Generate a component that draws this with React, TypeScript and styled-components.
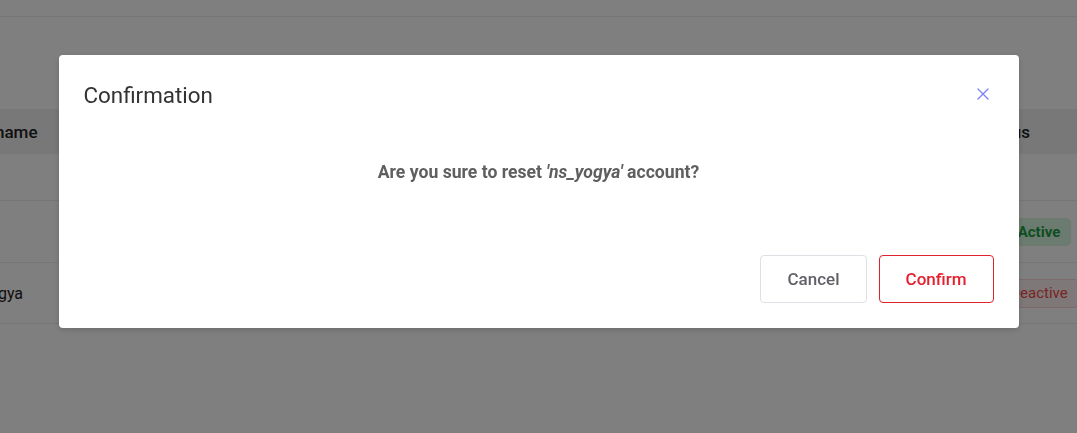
import React from "react";
import styled, { createGlobalStyle } from "styled-components";

const GlobalStyle = createGlobalStyle`
  html, body {
    margin: 0;
    padding: 0;
    background: #ffffff;
    font-family: Roboto, "Noto Sans", Arial, sans-serif;
    color: #333333;
  }
  * { box-sizing: border-box; }
`;

const Page = styled.div`
  width: 100%;
  min-height: 433px;
  background: #ffffff;
  overflow: hidden;
`;

const TopBar = styled.div`
  height: 17px;
  border-bottom: 1px solid #ececec;
`;

const TableWrap = styled.div`
  margin-top: 92px;
  overflow: hidden;
`;

const Table = styled.div`
  width: 1153px;
  margin-left: -56px;
  display: flex;
  flex-direction: column;
`;

const Row = styled.div<{ $h: number; $head?: boolean }>`
  display: grid;
  grid-template-columns: 1fr 116px;
  align-items: center;
  height: ${(p) => p.$h}px;
  background: ${(p) => (p.$head ? "#f1f1f1" : "#ffffff")};
  border-bottom: ${(p) => (p.$head ? "none" : "1px solid #ececec")};
`;

const HeadCell = styled.div`
  padding: 0 16px;
  font-size: 17px;
  font-weight: 500;
  color: #222222;
`;

const StatusHead = styled(HeadCell)`
  padding: 0;
`;

const Cell = styled.div`
  padding: 0 16px;
  font-size: 16px;
  color: #222222;
`;

const NameText = styled.span`
  margin-left: -3px;
`;

const BadgeCell = styled.div`
  display: flex;
  justify-content: center;
`;

const Badge = styled.span<{ $tone: "ok" | "off" }>`
  display: inline-flex;
  align-items: center;
  height: ${(p) => (p.$tone === "ok" ? 28 : 29)}px;
  padding: 0 10px;
  border-radius: 5px;
  font-size: 15px;
  font-weight: ${(p) => (p.$tone === "ok" ? 700 : 400)};
  color: ${(p) => (p.$tone === "ok" ? "#1f9d45" : "#f04a4a")};
  background: ${(p) => (p.$tone === "ok" ? "#d6f6de" : "#fff0f0")};
  border: 1px solid ${(p) => (p.$tone === "ok" ? "#d6f6de" : "#f8d4d4")};
`;

const Overlay = styled.div`
  position: fixed;
  inset: 0;
  background: rgba(0, 0, 0, 0.5);
  display: flex;
  justify-content: center;
  align-items: flex-start;
  padding-top: 55px;
`;

const Modal = styled.div`
  width: 960px;
  background: #ffffff;
  border-radius: 4px;
  box-shadow: 0 2px 6px rgba(0, 0, 0, 0.15);
  display: flex;
  flex-direction: column;
`;

const ModalHeader = styled.div`
  display: flex;
  align-items: center;
  justify-content: space-between;
  padding: 25px 24px 0 25px;
  height: 55px;
`;

const Title = styled.h2`
  margin: 0;
  font-size: 22.4px;
  line-height: 30px;
  font-weight: 400;
  color: #333333;
`;

const CloseButton = styled.button`
  width: 24px;
  height: 24px;
  padding: 0;
  border: none;
  background: transparent;
  display: flex;
  align-items: center;
  justify-content: center;
  margin-top: -2px;
  cursor: pointer;
`;

const ModalBody = styled.div`
  padding: 50px 25px;
  text-align: center;
`;

const Message = styled.p`
  margin: 0;
  font-size: 17.6px;
  line-height: 24px;
  font-weight: 700;
  color: #5f5f5f;
`;

const Name = styled.em`
  font-style: italic;
`;

const ModalFooter = styled.div`
  display: flex;
  justify-content: flex-end;
  gap: 12px;
  padding: 21px 25px 25px;
`;

const Button = styled.button<{ $variant: "plain" | "danger" }>`
  height: 48px;
  padding: 0 26px;
  border-radius: 4px;
  background: #ffffff;
  font-family: Roboto, "Noto Sans", Arial, sans-serif;
  font-size: 17px;
  font-weight: 500;
  cursor: pointer;
  color: ${(p) => (p.$variant === "danger" ? "#e5202e" : "#606066")};
  border: 1px solid ${(p) => (p.$variant === "danger" ? "#e0222e" : "#dfe0e6")};
`;

export default function App() {
  return (
    <>
      <GlobalStyle />
      <Page>
        <TopBar />
        <TableWrap>
          <Table>
            <Row $h={45} $head>
              <HeadCell>Username</HeadCell>
              <StatusHead>Status</StatusHead>
            </Row>
            <Row $h={47}>
              <Cell />
              <Cell />
            </Row>
            <Row $h={62}>
              <Cell>
                <NameText>nsa</NameText>
              </Cell>
              <BadgeCell>
                <Badge $tone="ok">Active</Badge>
              </BadgeCell>
            </Row>
            <Row $h={61}>
              <Cell>
                <NameText>ns_yogya</NameText>
              </Cell>
              <BadgeCell>
                <Badge $tone="off">Deactive</Badge>
              </BadgeCell>
            </Row>
          </Table>
        </TableWrap>
      </Page>
      <Overlay>
        <Modal role="dialog" aria-modal="true">
          <ModalHeader>
            <Title>Confirmation</Title>
            <CloseButton aria-label="Close">
              <svg width="12" height="12" viewBox="0 0 12 12" fill="none">
                <path d="M1 1L11 11M11 1L1 11" stroke="#7c80f2" strokeWidth="1.3" strokeLinecap="round" />
              </svg>
            </CloseButton>
          </ModalHeader>
          <ModalBody>
            <Message>
              Are you sure to reset <Name>'ns_yogya'</Name> account?
            </Message>
          </ModalBody>
          <ModalFooter>
            <Button $variant="plain">Cancel</Button>
            <Button $variant="danger">Confirm</Button>
          </ModalFooter>
        </Modal>
      </Overlay>
    </>
  );
}
